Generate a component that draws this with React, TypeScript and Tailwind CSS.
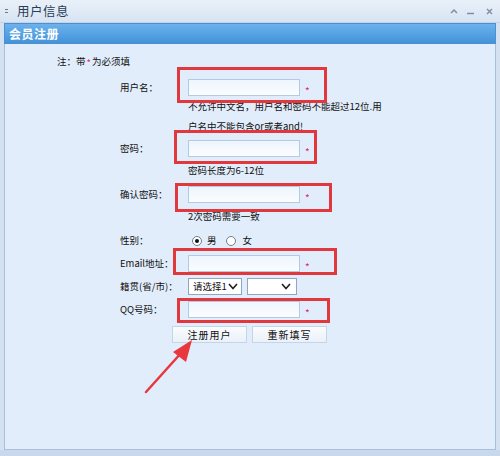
import React from "react";

const Star = () => (
  <span className="ml-[5px] text-[#e0245e] text-[10px] leading-none relative top-[3px]">*</span>
);

function TextInput({ boxClass }: { boxClass: string }) {
  return (
    <div className="relative flex items-center">
      <input
        readOnly
        className="w-[112px] h-[17px] border border-[#b3c9e4] bg-gradient-to-b from-[#eef5fd] to-[#fbfdff] outline-none"
      />
      <Star />
      <div className={`absolute border-[3px] border-[#e1383d] pointer-events-none ${boxClass}`} />
    </div>
  );
}

function Row({
  label,
  className,
  children,
}: {
  label: string;
  className: string;
  children: React.ReactNode;
}) {
  return (
    <div className={`flex items-center pl-[115px] ${className}`}>
      <div className="w-[68px] whitespace-nowrap">{label}</div>
      <div className="flex items-center">{children}</div>
    </div>
  );
}

function Chevron() {
  return (
    <svg width="10" height="7" viewBox="0 0 10 7" className="shrink-0">
      <path d="M1 1 L5 5.5 L9 1" fill="none" stroke="#222" strokeWidth="1.6" />
    </svg>
  );
}

function Radio({ checked }: { checked?: boolean }) {
  return (
    <span className="w-[10px] h-[10px] rounded-full border border-[#6f7f93] bg-white flex items-center justify-center">
      {checked && <span className="w-[4px] h-[4px] rounded-full bg-[#111]" />}
    </span>
  );
}

export default function App() {
  return (
    <div className="w-[500px] h-[456px] bg-[#d4e1f1] relative overflow-hidden font-['Noto_Sans_CJK_SC','Liberation_Sans',sans-serif] text-[#111]">
      {/* title bar */}
      <div className="h-[23px] flex items-center bg-gradient-to-b from-[#e9f0f9] to-[#d8e4f3] border-b border-[#c3d4ea]">
        <div className="ml-[5px] w-[3px] flex flex-col gap-[2px]">
          <span className="h-[1px] bg-[#6b7b90]" />
          <span className="h-[1px] bg-[#6b7b90]" />
        </div>
        <span className="ml-[9px] text-[12.5px] text-[#2a3d55] tracking-[0.5px]">用户信息</span>
        <div className="ml-auto mr-[7px] flex items-center text-[#7d8ea5]">
          <svg width="8" height="6" viewBox="0 0 8 6" className="mr-[9px]">
            <path d="M1 5 L4 2 L7 5" fill="none" stroke="#7d8ea5" strokeWidth="1.5" />
          </svg>
          <svg width="7" height="8" viewBox="0 0 7 8" className="mr-[12px]">
            <path d="M0 6.5 H7" stroke="#7d8ea5" strokeWidth="1.5" />
          </svg>
          <svg width="7" height="7" viewBox="0 0 7 7">
            <path d="M1 1 L6 6 M6 1 L1 6" stroke="#7d8ea5" strokeWidth="1.4" />
          </svg>
        </div>
      </div>

      <div className="px-[4px]">
        {/* blue header */}
        <div className="h-[21px] flex items-center bg-gradient-to-b from-[#6cb2ec] to-[#4293da] border border-[#4f8fcf] pl-[4px]">
          <span className="text-white text-[12px] font-bold tracking-[0.5px]">会员注册</span>
        </div>

        {/* body */}
        <div className="h-[406px] bg-[#e2edfb] border-x border-b border-[#a7c0df] pt-[6px] text-[9.5px] leading-none">
          <div className="h-[24px] flex items-center pl-[52px] whitespace-nowrap">
            注：带<span className="text-[#e0245e] relative top-[2px] px-[1px]">*</span>为必须填
          </div>

          <Row label="用户名：" className="mt-[5px] h-[17px]">
            <TextInput boxClass="left-[-11px] top-[-12px] w-[150px] h-[36px]" />
          </Row>
          <div className="pl-[183px] leading-[20px] whitespace-nowrap">
            不允许中文名，用户名和密码不能超过12位.用
            <br />
            户名中不能包含or或者and!
          </div>

          <Row label="密码：" className="mt-[4px] h-[17px]">
            <TextInput boxClass="left-[-14px] top-[-10px] w-[143px] h-[34px]" />
          </Row>
          <div className="mt-[3px] pl-[183px] leading-[20px] whitespace-nowrap">密码长度为6-12位</div>

          <Row label="确认密码：" className="mt-[6px] h-[17px]">
            <TextInput boxClass="left-[-13px] top-[-3px] w-[157px] h-[29px]" />
          </Row>
          <div className="mt-[3px] pl-[183px] leading-[20px] whitespace-nowrap">2次密码需要一致</div>

          <Row label="性别：" className="mt-[5px] h-[20px]">
            <div className="flex items-center pl-[4px]">
              <Radio checked />
              <span className="ml-[5px]">男</span>
              <span className="ml-[9px]">
                <Radio />
              </span>
              <span className="ml-[7px]">女</span>
            </div>
          </Row>

          <Row label="Email地址：" className="mt-[4px] h-[17px]">
            <TextInput boxClass="left-[-15px] top-[-7px] w-[164px] h-[27px]" />
          </Row>

          <Row label="籍贯(省/市)：" className="mt-[6px] h-[17px]">
            <div className="w-[54px] h-[17px] border border-[#8ea6c4] bg-white flex items-center justify-between pl-[4px] pr-[3px] whitespace-nowrap overflow-hidden">
              <span>请选择1</span>
              <Chevron />
            </div>
            <div className="ml-[5px] w-[50px] h-[17px] border border-[#8ea6c4] bg-white flex items-center justify-end pr-[5px]">
              <Chevron />
            </div>
          </Row>

          <Row label="QQ号码：" className="mt-[6px] h-[17px]">
            <TextInput boxClass="left-[-11px] top-[-3px] w-[153px] h-[25px]" />
          </Row>

          <div className="mt-[8px] pl-[167px] flex gap-[5px] text-[10px]">
            <button className="w-[75px] h-[17px] border border-[#c5d4e6] bg-gradient-to-b from-[#fafcfe] to-[#eaf1f9] flex items-center justify-center tracking-[1px]">
              注册用户
            </button>
            <button className="w-[75px] h-[17px] border border-[#c5d4e6] bg-gradient-to-b from-[#fafcfe] to-[#eaf1f9] flex items-center justify-center tracking-[1px]">
              重新填写
            </button>
          </div>
        </div>
      </div>
      <div className="h-[6px] bg-[#c9d8ea]" />

      {/* annotation arrow */}
      <svg className="absolute left-0 top-0 pointer-events-none" width="500" height="456">
        <line x1="146" y1="392" x2="182" y2="352" stroke="#e8383d" strokeWidth="2.5" strokeLinecap="round" />
        <polygon points="192,340 173,352 186,362" fill="#e8383d" />
      </svg>
    </div>
  );
}
